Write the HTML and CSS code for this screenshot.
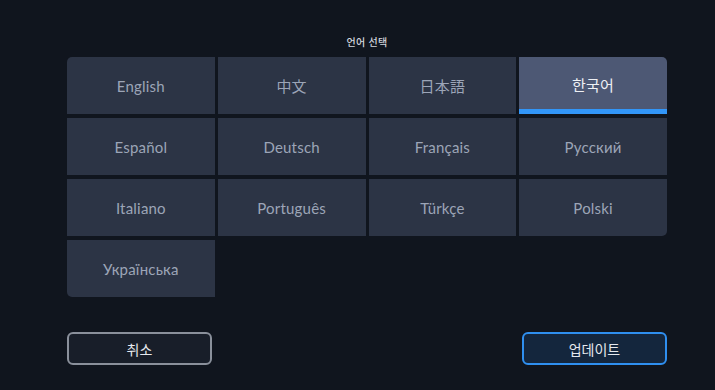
FILE: index.html
```html
<!DOCTYPE html>
<html lang="ko">
<head>
<meta charset="utf-8">
<link rel="stylesheet" href="styles.css">
</head>
<body>
<main class="panel">
  <h1 class="title">언어 선택</h1>
  <div class="grid">
    <div class="cell c-tl">English</div>
    <div class="cell">中文</div>
    <div class="cell">日本語</div>
    <div class="cell c-tr selected">한국어</div>
    <div class="cell">Español</div>
    <div class="cell">Deutsch</div>
    <div class="cell">Français</div>
    <div class="cell">Русский</div>
    <div class="cell">Italiano</div>
    <div class="cell">Português</div>
    <div class="cell">Türkçe</div>
    <div class="cell c-br">Polski</div>
    <div class="cell c-bl">Українська</div>
  </div>
  <div class="actions">
    <button class="btn btn-cancel">취소</button>
    <button class="btn btn-update">업데이트</button>
  </div>
</main>
</body>
</html>
```

FILE: styles.css
```css
html, body {
  margin: 0;
  padding: 0;
  background: #10151e;
  height: 100%;
}
body {
  font-family: Lato, "Noto Sans CJK KR", sans-serif;
  overflow: hidden;
}
.panel {
  width: 600px;
  margin-left: 67px;
  padding-top: 35px;
}
.title {
  margin: 0 0 9px 0;
  font-size: 10px;
  line-height: 13px;
  font-weight: 500;
  text-align: center;
  color: #d3d7df;
  font-family: "Noto Sans CJK KR", sans-serif;
  letter-spacing: 0.3px;
}
.grid {
  display: grid;
  grid-template-columns: repeat(4, 1fr);
  grid-auto-rows: 57px;
  column-gap: 3px;
  row-gap: 4px;
}
.cell {
  background: #2c3445;
  color: #9ca5b7;
  font-size: 15px;
  display: flex;
  align-items: center;
  justify-content: center;
  letter-spacing: 0.2px;
  box-sizing: border-box;
}
.c-tl { border-top-left-radius: 5px; }
.c-tr { border-top-right-radius: 5px; }
.c-br { border-bottom-right-radius: 5px; }
.c-bl { border-bottom-left-radius: 5px; }
.selected {
  background: #4d5874;
  color: #eef0f4;
  border-bottom: 5px solid #3296f8;
  padding-top: 3px;
}
.actions {
  display: flex;
  justify-content: space-between;
  margin-top: 35px;
}
.btn {
  width: 145px;
  height: 33px;
  border-radius: 6px;
  font-family: "Noto Sans CJK KR", Lato, sans-serif;
  font-size: 14px;
  color: #e6e9ee;
  box-sizing: border-box;
  padding: 0;
  display: flex;
  align-items: center;
  justify-content: center;
}
.btn-cancel {
  background: #181e29;
  border: 2px solid #8a909b;
}
.btn-update {
  background: #14263d;
  border: 2px solid #2f8ff0;
}
```
